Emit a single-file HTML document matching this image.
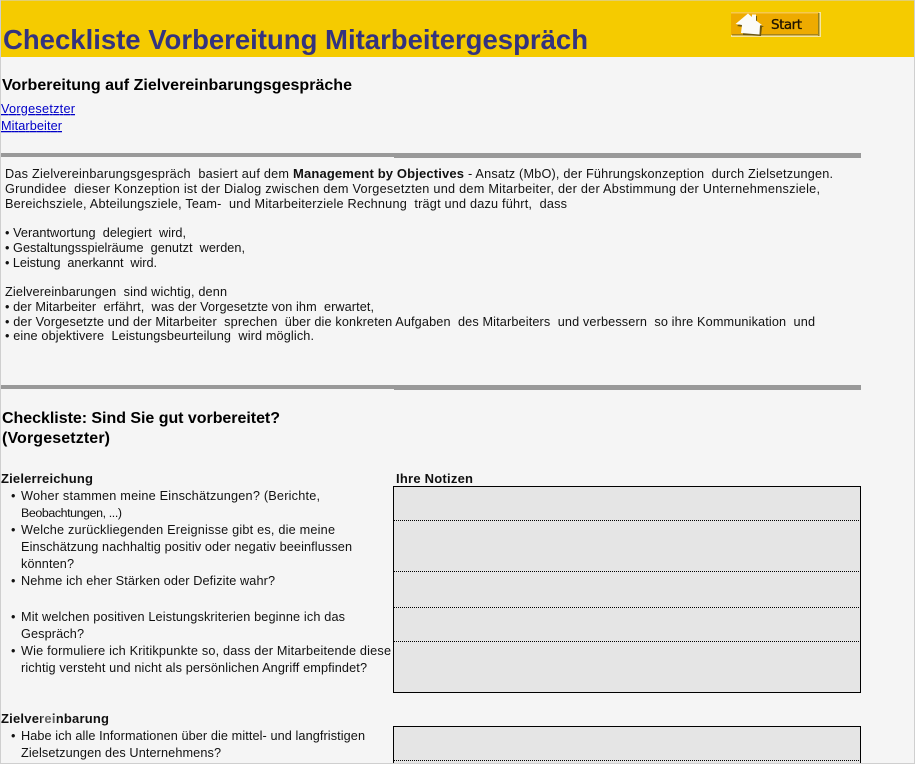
<!DOCTYPE html>
<html lang="de"><head><meta charset="utf-8"><title>Checkliste</title>
<style>html,body{margin:0;padding:0;background:#f5f5f5;width:915px;height:764px;overflow:hidden}svg{display:block}
text{font-family:"Liberation Sans",Arial,sans-serif;font-size:12.700px;fill:#111;white-space:pre}
.b{font-weight:bold;font-size:13px}.h{font-weight:bold;font-size:16px;fill:#000}.l{fill:#0000c8;text-decoration:underline}</style></head><body>
<svg width="915" height="764" viewBox="0 0 915 764" xmlns="http://www.w3.org/2000/svg">
<rect width="915" height="764" fill="#f5f5f5"/>
<rect x="0" y="0" width="915" height="57" fill="#f5cb00"/>
<rect x="0" y="0" width="915" height="1" fill="#e2cf70"/>
<rect x="0" y="0" width="1" height="764" fill="#cfcfcf"/>
<rect x="914" y="0" width="1" height="764" fill="#cfcfcf"/>
<rect x="0" y="763" width="915" height="1" fill="#cfcfcf"/>
<text x="3" y="49" textLength="585" class="b" style="font-size:27.500px;fill:#33337f">Checkliste Vorbereitung Mitarbeitergespräch</text>
<rect x="731" y="12" width="90" height="25" fill="#f6e6a0"/>
<rect x="731" y="12" width="88" height="23" fill="#eeab00"/>
<rect x="731" y="12" width="88" height="1.500" fill="#f6c850"/>
<rect x="818" y="13" width="1.500" height="23" fill="#96801c"/>
<rect x="732" y="34" width="87" height="1.500" fill="#a88418"/>
<path d="M737 26L749 16L753 20V16L757 16V23L764 27L762 27L761 36L743 35V27Z" fill="#6a5510"/>
<path d="M735.500 24L748 13.500L752 17V14.500L756 14.500V20.500L762 25L760 25.500L759.500 34.500L741 33L742 25Z" fill="#fbfbf8"/>
<text x="771" y="29" textLength="31" style="font-family:'DejaVu Sans',sans-serif;font-size:13.500px;fill:#201400;stroke:#201400;stroke-width:.3">Start</text>
<text x="2" y="90" textLength="350" class="h">Vorbereitung auf Zielvereinbarungsgespräche</text>
<text x="1" y="113" textLength="74" class="l">Vorgesetzter</text>
<text x="1" y="130" textLength="61" class="l">Mitarbeiter</text>
<rect x="1" y="153" width="393" height="4" fill="#999"/><rect x="394" y="153" width="467" height="5" fill="#999"/>
<text x="5" y="178" textLength="284">Das Zielvereinbarungsgespräch  basiert auf dem</text>
<text x="293" y="178" textLength="171" class="b">Management by Objectives</text>
<text x="468" y="178" textLength="365">- Ansatz (MbO), der Führungskonzeption  durch Zielsetzungen.</text>
<text x="5" y="193" textLength="815">Grundidee  dieser Konzeption ist der Dialog zwischen dem Vorgesetzten und dem Mitarbeiter, der der Abstimmung der Unternehmensziele,</text>
<text x="5" y="208" textLength="562">Bereichsziele, Abteilungsziele, Team-  und Mitarbeiterziele Rechnung  trägt und dazu führt,  dass</text>
<text x="5" y="237" textLength="181">• Verantwortung  delegiert  wird,</text>
<text x="5" y="252" textLength="240">• Gestaltungsspielräume  genutzt  werden,</text>
<text x="5" y="267" textLength="152">• Leistung  anerkannt  wird.</text>
<text x="5" y="296" textLength="222">Zielvereinbarungen  sind wichtig, denn</text>
<text x="5" y="311" textLength="369">• der Mitarbeiter  erfährt,  was der Vorgesetzte von ihm  erwartet,</text>
<text x="5" y="326" textLength="810">• der Vorgesetzte und der Mitarbeiter  sprechen  über die konkreten Aufgaben  des Mitarbeiters  und verbessern  so ihre Kommunikation  und</text>
<text x="5" y="340" textLength="309">• eine objektivere  Leistungsbeurteilung  wird möglich.</text>
<rect x="1" y="385" width="393" height="4" fill="#999"/><rect x="394" y="385" width="467" height="5" fill="#999"/>
<text x="2" y="423" textLength="278" class="h">Checkliste: Sind Sie gut vorbereitet?</text>
<text x="2" y="443" textLength="108" class="h">(Vorgesetzter)</text>
<text x="1" y="483" textLength="92" class="b">Zielerreichung</text>
<text x="396" y="483" textLength="77" class="b">Ihre Notizen</text>
<rect x="393.500" y="486.500" width="467" height="206" fill="#e5e5e5" stroke="#000"/>
<g stroke="#000" stroke-dasharray="1 1"><path d="M394 520.500H860M394 571.500H860M394 607.500H860M394 641.500H860"/></g>
<g>
<text x="11" y="500">•</text><text x="21" y="500" textLength="299">Woher stammen meine Einschätzungen? (Berichte,</text>
<text x="21" y="517" textLength="101" style="font-size:12.400px">Beobachtungen, ...)</text>
<text x="11" y="534">•</text><text x="21" y="534" textLength="314">Welche zurückliegenden Ereignisse gibt es, die meine</text>
<text x="21" y="551" textLength="331">Einschätzung nachhaltig positiv oder negativ beeinflussen</text>
<text x="21" y="568" textLength="53">könnten?</text>
<text x="11" y="585">•</text><text x="21" y="585" textLength="254">Nehme ich eher Stärken oder Defizite wahr?</text>
<text x="11" y="621">•</text><text x="21" y="621" textLength="324">Mit welchen positiven Leistungskriterien beginne ich das</text>
<text x="21" y="638" textLength="63">Gespräch?</text>
<text x="11" y="655">•</text><text x="21" y="655" textLength="370">Wie formuliere ich Kritikpunkte so, dass der Mitarbeitende diese</text>
<text x="21" y="672" textLength="346">richtig versteht und nicht als persönlichen Angriff empfindet?</text>
</g>
<text x="1" y="723" textLength="108" class="b">Zielvereinbarung</text>
<rect x="41" y="715" width="16" height="8" fill="#f5f5f5" opacity=".35"/>
<text x="11" y="740">•</text><text x="21" y="740" textLength="344">Habe ich alle Informationen über die mittel- und langfristigen</text>
<text x="21" y="757" textLength="200">Zielsetzungen des Unternehmens?</text>
<path d="M393.500 763V726.500H860.500V763" fill="#e5e5e5" stroke="#000"/>
<path d="M394 760.500H860" stroke="#000" stroke-dasharray="1 1"/>
<rect x="393" y="763" width="468" height="1" fill="#cfcfcf"/>
</svg>
</body></html>
